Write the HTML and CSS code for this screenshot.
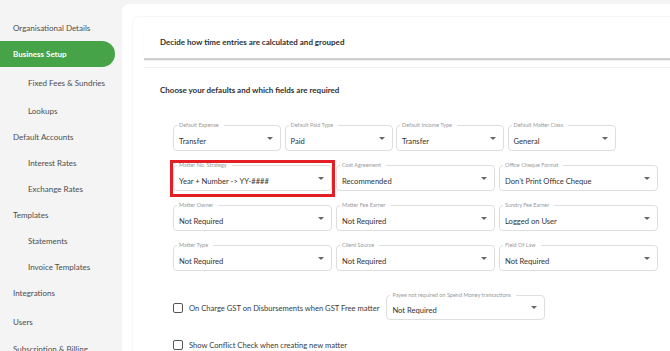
FILE: index.html
```html
<!DOCTYPE html>
<html lang="en">
<head>
    <meta charset="UTF-8">
    <meta name="viewport" content="width=device-width, initial-scale=1.0">
    <title>Business Setup</title>
    <link rel="stylesheet" href="styles.css">
</head>
<body>
    <div class="layout">
        <nav class="sidebar">
            <a class="nav-item">Organisational Details</a>
            <a class="nav-item active">Business Setup</a>
            <a class="nav-item sub push-3">Fixed Fees &amp; Sundries</a>
            <a class="nav-item sub push-2">Lookups</a>
            <a class="nav-item">Default Accounts</a>
            <a class="nav-item sub">Interest Rates</a>
            <a class="nav-item sub">Exchange Rates</a>
            <a class="nav-item">Templates</a>
            <a class="nav-item sub">Statements</a>
            <a class="nav-item sub">Invoice Templates</a>
            <a class="nav-item">Integrations</a>
            <a class="nav-item push-3">Users</a>
            <a class="nav-item push-1">Subscription &amp; Billing</a>
        </nav>

        <main class="main">
            <div class="panel">
                <div class="card">
                    <section class="accordion collapsed">
                        <h3>Decide how time entries are calculated and grouped</h3>
                    </section>

                    <section class="accordion">
                        <h3>Choose your defaults and which fields are required</h3>

                        <div class="fields four">
                            <div class="field">
                                <span class="field-label">Default Expense</span>
                                <span class="field-value">Transfer</span>
                                <span class="caret"></span>
                            </div>
                            <div class="field">
                                <span class="field-label">Default Paid Type</span>
                                <span class="field-value">Paid</span>
                                <span class="caret"></span>
                            </div>
                            <div class="field">
                                <span class="field-label">Default Income Type</span>
                                <span class="field-value">Transfer</span>
                                <span class="caret"></span>
                            </div>
                            <div class="field">
                                <span class="field-label">Default Matter Class</span>
                                <span class="field-value">General</span>
                                <span class="caret"></span>
                            </div>
                        </div>

                        <div class="fields three">
                            <div class="field highlighted">
                                <span class="field-label">Matter No. Strategy</span>
                                <span class="field-value">Year + Number -&gt; YY-####</span>
                                <span class="caret"></span>
                            </div>
                            <div class="field">
                                <span class="field-label">Cost Agreement</span>
                                <span class="field-value">Recommended</span>
                                <span class="caret"></span>
                            </div>
                            <div class="field">
                                <span class="field-label">Office Cheque Format</span>
                                <span class="field-value">Don’t Print Office Cheque</span>
                                <span class="caret"></span>
                            </div>
                        </div>

                        <div class="fields three">
                            <div class="field">
                                <span class="field-label">Matter Owner</span>
                                <span class="field-value">Not Required</span>
                                <span class="caret"></span>
                            </div>
                            <div class="field">
                                <span class="field-label">Matter Fee Earner</span>
                                <span class="field-value">Not Required</span>
                                <span class="caret"></span>
                            </div>
                            <div class="field">
                                <span class="field-label">Sundry Fee Earner</span>
                                <span class="field-value">Logged on User</span>
                                <span class="caret"></span>
                            </div>
                        </div>

                        <div class="fields three">
                            <div class="field">
                                <span class="field-label">Matter Type</span>
                                <span class="field-value">Not Required</span>
                                <span class="caret"></span>
                            </div>
                            <div class="field">
                                <span class="field-label">Client Source</span>
                                <span class="field-value">Not Required</span>
                                <span class="caret"></span>
                            </div>
                            <div class="field">
                                <span class="field-label">Field Of Law</span>
                                <span class="field-value">Not Required</span>
                                <span class="caret"></span>
                            </div>
                        </div>

                        <div class="check-row">
                            <label class="check">
                                <span class="box"></span>
                                On Charge GST on Disbursements when GST Free matter
                            </label>
                            <div class="field payee">
                                <span class="field-label">Payee not required on Spend Money transactions</span>
                                <span class="field-value">Not Required</span>
                                <span class="caret"></span>
                            </div>
                        </div>

                        <div class="check-row second">
                            <label class="check">
                                <span class="box"></span>
                                Show Conflict Check when creating new matter
                            </label>
                        </div>
                    </section>
                </div>
            </div>
        </main>
    </div>
</body>
</html>
```

FILE: styles.css
```css
body {
    margin: 0;
    background-color: #f4f4f4;
    font-family: Lato, "Open Sans", sans-serif;
    color: #333;
    overflow: hidden;
}
.layout {
    display: flex;
    height: 351px;
}

/* sidebar */
.sidebar {
    flex: 0 0 122px;
    padding-top: 15px;
    display: flex;
    flex-direction: column;
}
.nav-item {
    display: flex;
    align-items: center;
    height: 26px;
    flex: 0 0 26px;
    padding-left: 13px;
    font-size: 8px;
    color: #4d4d4d;
    white-space: nowrap;
}
.nav-item.sub {
    padding-left: 28px;
}
.nav-item.active {
    width: 102px;
    background-color: #47a347;
    color: #fff;
    font-weight: 700;
    border-radius: 0 13px 13px 0;
}
.push-1 { margin-top: 1px; }
.push-2 { margin-top: 2px; }
.push-3 { margin-top: 3px; }

/* main panel */
.main {
    flex: 0 0 570px;
    padding-top: 4px;
}
.panel {
    background-color: #fff;
    border-radius: 7px 0 0 0;
    padding: 13px 0 0 11px;
    height: 400px;
}
.card {
    border-radius: 6px 0 0 0;
    box-shadow: 0 0 2px rgba(0, 0, 0, 0.12);
    padding: 9px 0 0 11px;
    height: 400px;
}
.accordion h3 {
    margin: 0;
    padding-left: 16px;
    font-size: 8px;
    font-weight: 700;
    color: #2f2f2f;
    display: flex;
    align-items: center;
}
.accordion.collapsed {
    border-bottom: 2px solid #cecece;
    box-shadow: 0 1px 1px rgba(0, 0, 0, 0.06);
}
.accordion.collapsed h3 {
    height: 32px;
}
.accordion + .accordion {
    margin-top: 7px;
    border-top: 1px solid #f0f0f0;
}
.accordion + .accordion h3 {
    height: 44px;
}

/* select fields */
.fields {
    display: grid;
    margin: 13px 0 0 29px;
}
.fields + .fields {
    margin-top: 14px;
}
.fields.four {
    grid-template-columns: repeat(4, 108px);
    column-gap: 3.5px;
}
.fields.three {
    grid-template-columns: repeat(3, 159px);
    column-gap: 4px;
}
.field {
    position: relative;
    height: 26px;
    box-sizing: border-box;
    border: 1px solid #dedede;
    border-radius: 4px;
    display: flex;
    align-items: center;
    justify-content: space-between;
    padding: 0 7px 0 5px;
}
.field-label {
    position: absolute;
    top: -4px;
    left: 3px;
    padding: 0 5px 0 2px;
    background-color: #fff;
    font-size: 5.5px;
    line-height: 7px;
    color: #9a9a9a;
    white-space: nowrap;
}
.field-value {
    margin-top: 5px;
    font-size: 7.6px;
    color: #333;
    white-space: nowrap;
}
.caret {
    width: 0;
    height: 0;
    border-left: 3px solid transparent;
    border-right: 3px solid transparent;
    border-top: 3px solid #666;
}
.field.highlighted::after {
    content: "";
    position: absolute;
    top: -6px;
    bottom: -7px;
    left: -4px;
    right: -4px;
    border: 3px solid #e31e24;
}

/* checkbox rows */
.check-row {
    display: flex;
    align-items: center;
    margin: 24px 0 0 29px;
}
.check-row.second {
    margin-top: 20px;
}
.check {
    display: flex;
    align-items: center;
    gap: 6px;
    font-size: 7.6px;
    color: #3a3a3a;
    margin-right: 7px;
    white-space: nowrap;
}
.box {
    width: 10px;
    height: 10px;
    box-sizing: border-box;
    border: 1.5px solid #555;
    border-radius: 2px;
}
.field.payee {
    width: 159px;
    height: 25px;
}
```
